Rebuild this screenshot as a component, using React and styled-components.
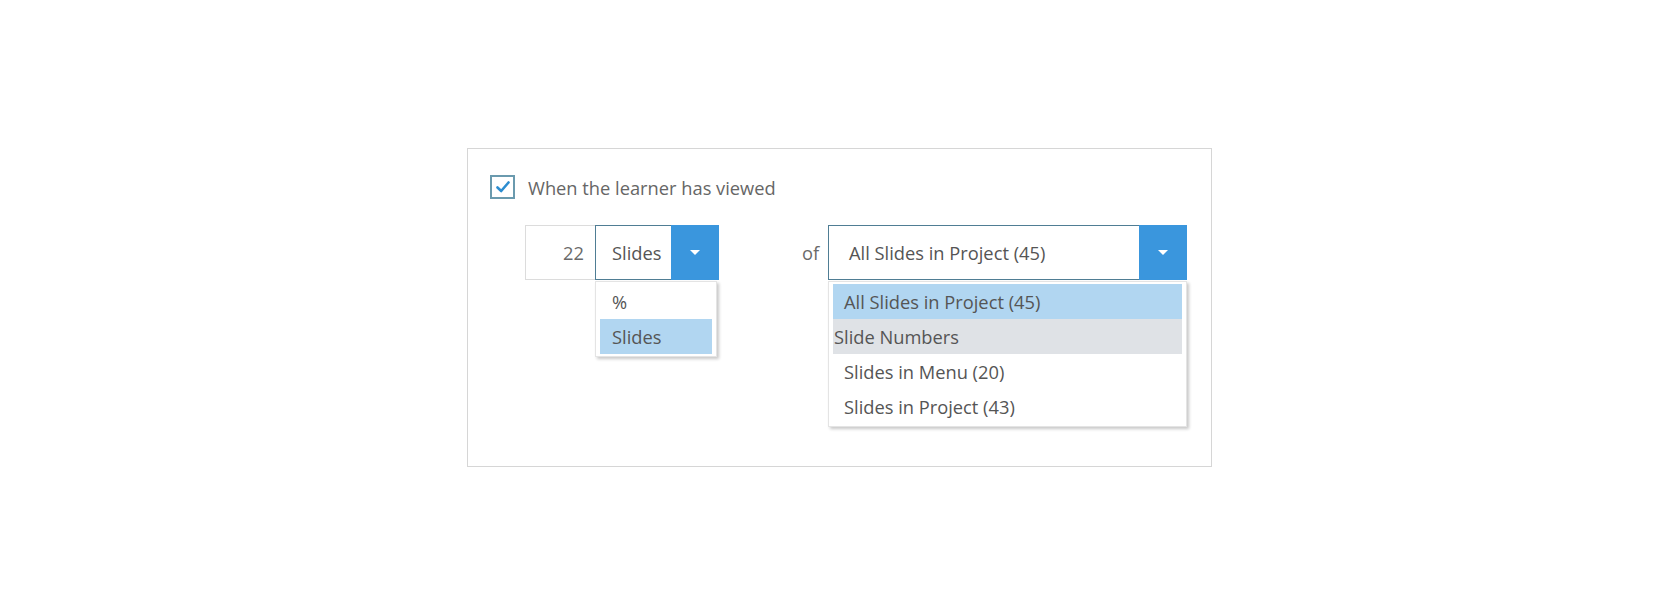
import React from "react";
import styled, { createGlobalStyle } from "styled-components";

const Global = createGlobalStyle`
  html, body { margin: 0; padding: 0; background: #ffffff; }
  body { font-family: "Open Sans", "Noto Sans", sans-serif; }
  * { box-sizing: border-box; }
`;

const Page = styled.div`
  width: 1680px;
  height: 616px;
  padding: 148px 0 0 467px;
`;

const Panel = styled.section`
  width: 745px;
  height: 319px;
  border: 1px solid #d6d6d6;
  padding: 26px 0 0 22px;
  display: flex;
  flex-direction: column;
  gap: 26px;
`;

const CheckRow = styled.label`
  display: flex;
  align-items: center;
  gap: 13px;
  height: 24px;
  color: #666;
  font-size: 18.3px;
`;

const CheckBox = styled.span`
  width: 25px;
  height: 24px;
  border: 2px solid #6a9aae;
  display: flex;
  align-items: center;
  justify-content: center;
  background: #fff;
`;

const Controls = styled.div`
  display: flex;
  align-items: center;
  padding-left: 35px;
`;

const NumberField = styled.div`
  width: 70px;
  height: 55px;
  border: 1px solid #dcdcdc;
  border-right: none;
  display: flex;
  align-items: center;
  justify-content: flex-end;
  padding-right: 11px;
  color: #6a6a6a;
  font-size: 18.3px;
`;

const SelectWrap = styled.div`
  position: relative;
  width: ${(p) => p.$width}px;
`;

const SelectBox = styled.div`
  height: 55px;
  border: 1px solid #4f7d94;
  display: flex;
  align-items: stretch;
  background: #fff;
`;

const SelectText = styled.span`
  flex: 1;
  display: flex;
  align-items: center;
  padding-left: ${(p) => p.$pad}px;
  color: #555;
  font-size: 18.3px;
  white-space: nowrap;
`;

const ArrowButton = styled.span`
  width: 48px;
  background: #3a96dd;
  display: flex;
  align-items: center;
  justify-content: center;
  margin: -1px -1px -1px 0;
`;

const Triangle = styled.span`
  width: 0;
  height: 0;
  border-left: 5px solid transparent;
  border-right: 5px solid transparent;
  border-top: 5px solid #ffffff;
`;

const OfLabel = styled.span`
  margin-left: 83px;
  color: #6a6a6a;
  font-size: 18.3px;
  width: 26px;
`;

const List = styled.ul`
  position: absolute;
  top: 100%;
  left: ${(p) => p.$left || 0}px;
  right: ${(p) => p.$right || 0}px;
  margin: 1px 0 0;
  padding: 2px 4px 2px;
  list-style: none;
  background: #fff;
  border: 1px solid #e4e4e4;
  box-shadow: 2px 2px 3px rgba(0, 0, 0, 0.22);
`;

const Item = styled.li`
  height: 35px;
  display: flex;
  align-items: center;
  padding-left: ${(p) => (p.$group ? 1 : p.$pad)}px;
  font-size: 18.3px;
  color: #555;
  white-space: nowrap;
  background: ${(p) => (p.$selected ? "#b1d6f1" : p.$group ? "#dfe2e6" : "transparent")};
`;

const Check = () => (
  <svg width="16" height="14" viewBox="0 0 16 14">
    <path d="M2.5 7.5 L6.2 11 L13.5 2.5" fill="none" stroke="#2c8dd0" strokeWidth="2.6" strokeLinecap="round" strokeLinejoin="round" />
  </svg>
);

export default function App() {
  return (
    <>
      <Global />
      <Page>
        <Panel>
          <CheckRow>
            <CheckBox>
              <Check />
            </CheckBox>
            When the learner has viewed
          </CheckRow>
          <Controls>
            <NumberField>22</NumberField>
            <SelectWrap $width={124}>
              <SelectBox>
                <SelectText $pad={16}>Slides</SelectText>
                <ArrowButton>
                  <Triangle />
                </ArrowButton>
              </SelectBox>
              <List $left={0} $right={2}>
                <Item $pad={12}>%</Item>
                <Item $pad={12} $selected>Slides</Item>
              </List>
            </SelectWrap>
            <OfLabel>of</OfLabel>
            <SelectWrap $width={359}>
              <SelectBox>
                <SelectText $pad={20}>All Slides in Project (45)</SelectText>
                <ArrowButton>
                  <Triangle />
                </ArrowButton>
              </SelectBox>
              <List $left={0} $right={0}>
                <Item $pad={11} $selected>All Slides in Project (45)</Item>
                <Item $group>Slide Numbers</Item>
                <Item $pad={11}>Slides in Menu (20)</Item>
                <Item $pad={11}>Slides in Project (43)</Item>
              </List>
            </SelectWrap>
          </Controls>
        </Panel>
      </Page>
    </>
  );
}
